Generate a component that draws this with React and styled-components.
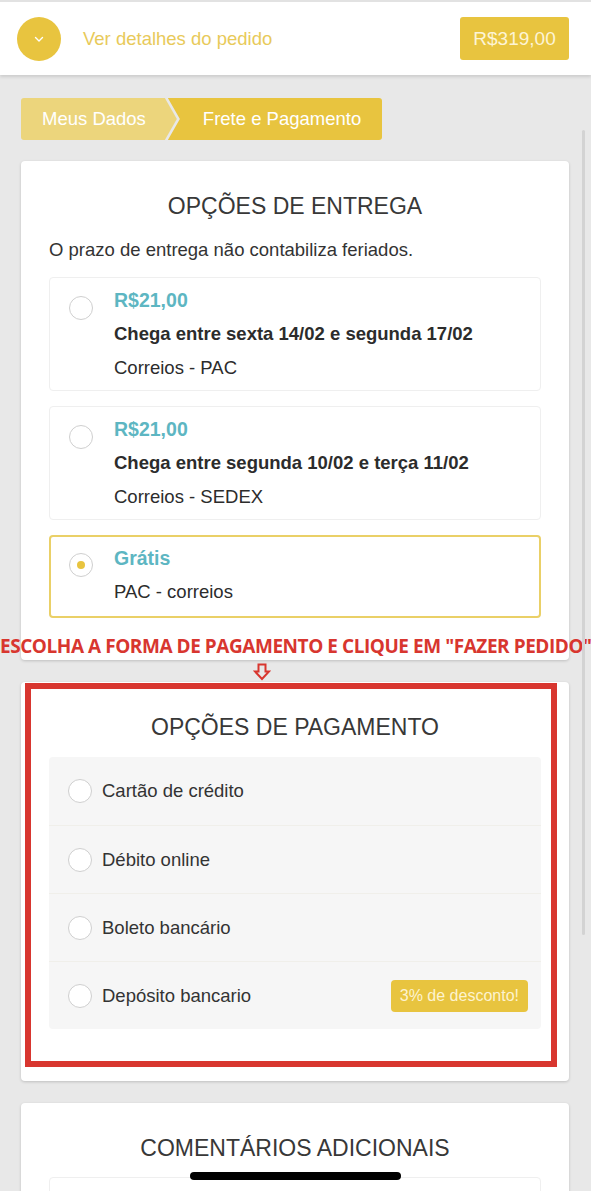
import React from 'react';
import styled, { createGlobalStyle } from 'styled-components';

const GlobalStyle = createGlobalStyle`
  html, body {
    margin: 0;
    padding: 0;
    background: #e8e8e8;
  }
  * {
    box-sizing: border-box;
  }
`;

const yellow = '#e8c43f';

const Page = styled.div`
  position: relative;
  height: 1191px;
  overflow: hidden;
  background: #e8e8e8;
  font-family: 'Liberation Sans', Arial, sans-serif;
  color: #333;
`;

const Header = styled.header`
  display: flex;
  align-items: center;
  height: 75px;
  padding: 0 22px 0 17px;
  background: #fff;
  border-top: 2px solid #e2e2e2;
  box-shadow: 0 2px 3px rgba(0, 0, 0, 0.12);
`;

const Toggle = styled.div`
  display: flex;
  align-items: center;
  justify-content: center;
  width: 44px;
  height: 44px;
  border-radius: 50%;
  background: ${yellow};
`;

const DetailsLink = styled.span`
  flex: 1;
  margin-left: 22px;
  font-size: 18.5px;
  color: #e8ca5a;
`;

const TotalButton = styled.div`
  display: flex;
  align-items: center;
  justify-content: center;
  width: 109px;
  height: 43px;
  border-radius: 3px;
  background: ${yellow};
  color: #fdf4d6;
  font-size: 19px;
`;

const Steps = styled.nav`
  display: flex;
  padding: 23px 0 0 21px;
`;

const Step = styled.div`
  display: flex;
  align-items: center;
  height: 42px;
  font-size: 18.5px;
  color: #fff;
  background: ${(p) => (p.$active ? yellow : '#ecd57c')};
  clip-path: ${(p) =>
    p.$active
      ? 'polygon(0 0, 100% 0, 100% 100%, 0 100%, 12px 50%)'
      : 'polygon(0 0, calc(100% - 12px) 0, 100% 50%, calc(100% - 12px) 100%, 0 100%)'};
  border-radius: ${(p) => (p.$active ? '0 3px 3px 0' : '3px 0 0 3px')};
  padding: ${(p) => (p.$active ? '0 21px 0 35px' : '0 31px 0 21px')};
  margin-left: ${(p) => (p.$active ? '-9px' : '0')};
`;

const Card = styled.section`
  position: relative;
  margin: ${(p) => p.$top}px 22px 0 21px;
  padding: 30px 28px ${(p) => p.$bottom}px;
  background: #fff;
  border-radius: 4px;
  box-shadow: 0 1px 3px rgba(0, 0, 0, 0.18);
`;

const CardTitle = styled.h2`
  margin: 0;
  text-align: center;
  font-size: 23px;
  line-height: 30px;
  font-weight: 400;
  color: #383838;
`;

const Note = styled.p`
  margin: 18px 0 0;
  font-size: 18.5px;
  line-height: 22px;
  color: #333;
`;

const Shipping = styled.div`
  display: flex;
  flex-direction: column;
  gap: 15px;
  margin-top: 16px;
`;

const ShipOption = styled.label`
  display: flex;
  align-items: flex-start;
  gap: 21px;
  padding: ${(p) => (p.$selected ? '9px 18px 12px' : '10px 19px 10px')};
  border: ${(p) => (p.$selected ? `2px solid #ead067` : '1px solid #efefef')};
  border-radius: 4px;
`;

const Radio = styled.span`
  position: relative;
  flex: none;
  width: 24px;
  height: 24px;
  margin-top: ${(p) => p.$offset || 0}px;
  border-radius: 50%;
  border: 1px solid #cfcfcf;
  background: #fff;

  &::after {
    content: '';
    display: ${(p) => (p.$checked ? 'block' : 'none')};
    position: absolute;
    left: 7px;
    top: 7px;
    width: 8px;
    height: 8px;
    border-radius: 50%;
    background: ${yellow};
  }
`;

const ShipInfo = styled.div`
  display: flex;
  flex-direction: column;
  gap: 10px;
`;

const Price = styled.span`
  font-size: 19.5px;
  line-height: 24px;
  font-weight: 700;
  color: #5db6c2;
`;

const Eta = styled.span`
  font-size: 18.5px;
  line-height: 24px;
  font-weight: 700;
  color: #2c2c2c;
`;

const Carrier = styled.span`
  font-size: 18.5px;
  line-height: 24px;
  color: #2c2c2c;
`;

const Annotation = styled.div`
  position: absolute;
  left: 0;
  right: 0;
  top: 634px;
  text-align: center;
  white-space: nowrap;
  font-family: 'Open Sans', sans-serif;
  font-weight: 700;
  font-size: 19px;
  letter-spacing: -0.45px;
  line-height: 24px;
  color: #d8362f;
`;

const Pointer = styled.svg`
  position: absolute;
  left: 253px;
  top: 663px;
`;

const Highlight = styled.div`
  position: absolute;
  left: 4px;
  right: 12px;
  top: 1px;
  bottom: 14px;
  border: 6px solid #d8362f;
  pointer-events: none;
`;

const Methods = styled.div`
  margin-top: 15px;
  background: #f6f6f6;
  border-radius: 4px;
`;

const Method = styled.label`
  display: flex;
  align-items: center;
  gap: 10px;
  height: 68px;
  padding: 0 13px 0 19px;
  font-size: 18.5px;
  color: #333;

  & + & {
    border-top: 1px solid #f0efea;
  }
`;

const MethodName = styled.span`
  flex: 1;
`;

const Badge = styled.span`
  display: flex;
  align-items: center;
  height: 32px;
  padding: 0 9px;
  border-radius: 4px;
  background: ${yellow};
  color: #fdf3cf;
  font-size: 16px;
`;

const CommentBox = styled.div`
  height: 60px;
  margin-top: 14px;
  border: 1px solid #efefef;
  border-radius: 4px;
`;

const ScrollTrack = styled.div`
  position: absolute;
  right: 6px;
  top: 130px;
  width: 3px;
  height: 805px;
  border-radius: 2px;
  background: #d3d3d3;
`;

const HomeBar = styled.div`
  position: absolute;
  left: 190px;
  top: 1172px;
  width: 211px;
  height: 8px;
  border-radius: 4px;
  background: #000;
`;

const shipping = [
  { price: 'R$21,00', eta: 'Chega entre sexta 14/02 e segunda 17/02', carrier: 'Correios - PAC' },
  { price: 'R$21,00', eta: 'Chega entre segunda 10/02 e terça 11/02', carrier: 'Correios - SEDEX' },
  { price: 'Grátis', carrier: 'PAC - correios', selected: true },
];

const methods = ['Cartão de crédito', 'Débito online', 'Boleto bancário', 'Depósito bancario'];

function App() {
  return (
    <Page>
      <GlobalStyle />
      <Header>
        <Toggle>
          <svg width="14" height="14" viewBox="0 0 14 14">
            <path d="M3.5 5.5 L7 9 L10.5 5.5" fill="none" stroke="#fff" strokeWidth="1.4" strokeLinecap="round" strokeLinejoin="round" />
          </svg>
        </Toggle>
        <DetailsLink>Ver detalhes do pedido</DetailsLink>
        <TotalButton>R$319,00</TotalButton>
      </Header>

      <Steps>
        <Step>Meus Dados</Step>
        <Step $active>Frete e Pagamento</Step>
      </Steps>

      <Card $top={21} $bottom={42}>
        <CardTitle>OPÇÕES DE ENTREGA</CardTitle>
        <Note>O prazo de entrega não contabiliza feriados.</Note>
        <Shipping>
          {shipping.map((opt, i) => (
            <ShipOption key={i} $selected={opt.selected}>
              <Radio $offset={opt.selected ? 7 : 8} $checked={opt.selected} />
              <ShipInfo>
                <Price>{opt.price}</Price>
                {opt.eta && <Eta>{opt.eta}</Eta>}
                <Carrier>{opt.carrier}</Carrier>
              </ShipInfo>
            </ShipOption>
          ))}
        </Shipping>
      </Card>

      <Annotation>ESCOLHA A FORMA DE PAGAMENTO E CLIQUE EM "FAZER PEDIDO"</Annotation>
      <Pointer width="18" height="18" viewBox="0 0 18 18">
        <path d="M5.5 1.5 H12.5 V8.5 H16 L9 16 L2 8.5 H5.5 Z" fill="none" stroke="#d8362f" strokeWidth="2" strokeLinejoin="miter" />
      </Pointer>

      <Card $top={22} $bottom={52}>
        <CardTitle>OPÇÕES DE PAGAMENTO</CardTitle>
        <Methods>
          {methods.map((m) => (
            <Method key={m}>
              <Radio />
              <MethodName>{m}</MethodName>
              {m === 'Depósito bancario' && <Badge>3% de desconto!</Badge>}
            </Method>
          ))}
        </Methods>
        <Highlight />
      </Card>

      <Card $top={22} $bottom={30}>
        <CardTitle>COMENTÁRIOS ADICIONAIS</CardTitle>
        <CommentBox />
      </Card>

      <ScrollTrack />
      <HomeBar />
    </Page>
  );
}

export default App;
